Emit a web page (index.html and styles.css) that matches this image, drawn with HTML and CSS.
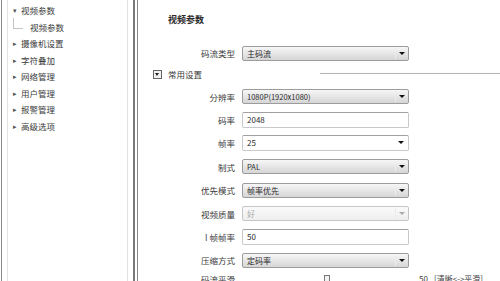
FILE: index.html
```html
<!DOCTYPE html>
<html lang="zh">
<head>
<meta charset="utf-8">
<link rel="stylesheet" href="styles.css">
</head>
<body>
<div class="page">
  <aside class="side">
    <div class="side-inner">
      <ul class="tree">
        <li class="node open"><span class="tw">&#9662;</span>视频参数</li>
        <li class="leaf"><span class="conn"></span>视频参数</li>
        <li class="node"><span class="tw">&#9656;</span>摄像机设置</li>
        <li class="node"><span class="tw">&#9656;</span>字符叠加</li>
        <li class="node"><span class="tw">&#9656;</span>网络管理</li>
        <li class="node"><span class="tw">&#9656;</span>用户管理</li>
        <li class="node"><span class="tw">&#9656;</span>报警管理</li>
        <li class="node"><span class="tw">&#9656;</span>高级选项</li>
      </ul>
    </div>
  </aside>
  <main class="main">
    <h1 class="title">视频参数</h1>
    <div class="form top">
      <label class="lbl">码流类型</label>
      <div class="sel">主码流<span class="arr"></span></div>
    </div>
    <div class="group">
      <span class="collapse"><span class="minus"></span></span>
      <span class="gtitle">常用设置</span>
      <span class="gline"></span>
    </div>
    <div class="form rows">
      <label class="lbl">分辨率</label>
      <div class="sel small">1080P(1920x1080)<span class="arr"></span></div>
      <label class="lbl">码率</label>
      <div class="inp">2048</div>
      <label class="lbl">帧率</label>
      <div class="inp combo">25<span class="arr"></span></div>
      <label class="lbl">制式</label>
      <div class="sel small">PAL<span class="arr"></span></div>
      <label class="lbl">优先模式</label>
      <div class="sel">帧率优先<span class="arr"></span></div>
      <label class="lbl">视频质量</label>
      <div class="sel dis">好<span class="arr"></span></div>
      <label class="lbl">I 帧帧率</label>
      <div class="inp">50</div>
      <label class="lbl">压缩方式</label>
      <div class="sel">定码率<span class="arr"></span></div>
      <label class="lbl last">码流平滑</label>
      <div class="slider"><span class="thumb"></span><span class="val">50</span><span class="hint">[清晰&lt;-&gt;平滑]</span></div>
    </div>
  </main>
</div>
</body>
</html>
```
FILE: styles.css
```css
* { box-sizing: border-box; margin: 0; padding: 0; }
html, body { width: 500px; height: 281px; overflow: hidden; background: #fff; }
body {
  font-family: "Noto Sans CJK SC", "Liberation Sans", sans-serif;
  font-size: 8.5px;
  color: #3a3a3a;
}
.page { display: flex; height: 281px; }
.side {
  width: 134px;
  height: 300px;
  border-left: 1px solid #8a8a8a;
  border-right: 2px solid #7a7a7a;
  margin-left: 1px;
  padding: 0 5px 0 5px;
  background: #fff;
}
.side-inner {
  height: 100%;
  border-left: 1px solid #e2e2e2;
  border-right: 1px solid #e2e2e2;
}
.tree { list-style: none; padding-top: 2px; }
.tree li {
  height: 16.5px;
  line-height: 16.5px;
  display: flex;
  align-items: center;
  white-space: nowrap;
  color: #3a3a3a;
}
.tw {
  width: 10px;
  margin-left: 2px;
  margin-right: 1px;
  font-size: 7px;
  color: #555;
  text-align: center;
}
.leaf { padding-left: 5px; }
.conn {
  width: 10px;
  height: 11px;
  border-left: 1px solid #c4c4c4;
  border-bottom: 1px solid #c4c4c4;
  margin-top: -7px;
  margin-right: 7px;
}
.main {
  flex: 1;
  border-left: 1px solid #8a8a8a;
  margin-left: 2px;
  position: relative;
}
.title {
  font-size: 9px;
  font-weight: bold;
  padding: 13px 0 0 30px;
  height: 45px;
  color: #2a2a2a;
}
.form {
  display: grid;
  grid-template-columns: 97px 167px;
  column-gap: 7px;
  align-items: center;
}
.form.top { grid-auto-rows: 16px; }
.rows { grid-auto-rows: 23.4px; }
.lbl { text-align: right; white-space: nowrap; }
.lbl.last, .slider { align-self: start; margin-top: 1px; }
.sel, .inp {
  position: relative;
  height: 15px;
  font-size: 8px;
  line-height: 13px;
  padding-left: 4px;
  border: 1px solid #9c9c9c;
  border-radius: 2px;
  color: #2a2a2a;
  white-space: nowrap;
}
.sel { background: linear-gradient(#f7f7f7, #e6e6e6 50%, #d6d6d6); }
.sel.small { font-size: 7.5px; }
.inp { background: #fff; border-color: #c8c8c8; border-top-color: #a0a0a0; height: 16px; line-height: 14px; }
.sel.dis { background: linear-gradient(#fafafa, #eeeeee); border-color: #c6c6c6; color: #aaa; }
.arr {
  position: absolute;
  right: 1px;
  top: 1px;
  width: 12px;
  height: 11px;
  border-left: 1px solid #ececec;
}
.arr::after {
  content: "";
  position: absolute;
  left: 3px;
  top: 4px;
  border-left: 3px solid transparent;
  border-right: 3px solid transparent;
  border-top: 3px solid #111;
}
.dis .arr::after { border-top-color: #aaa; }
.combo .arr { border-left: none; }
.group {
  display: flex;
  align-items: center;
  height: 16px;
  margin: 5px 0 3px 15px;
}
.collapse {
  width: 9px;
  height: 9px;
  border: 1px solid #666;
  background: #f0f0f0;
  position: relative;
  margin-right: 6px;
}
.minus {
  position: absolute;
  left: 1px;
  top: 2px;
  border-left: 2.5px solid transparent;
  border-right: 2.5px solid transparent;
  border-top: 3px solid #222;
}
.gline { flex: 1; height: 1px; background: #b4b4b4; margin-left: 118px; margin-top: -2px; }
.slider { position: relative; height: 14px; }
.thumb {
  position: absolute;
  left: 82px;
  top: 2px;
  width: 6px;
  height: 7px;
  border: 1px solid #777;
  background: #f2f2f2;
}
.val { position: absolute; left: 177px; top: 0; font-size: 8px; line-height: 12px; }
.hint { position: absolute; left: 192px; top: 0; font-size: 8px; line-height: 12px; white-space: nowrap; }
```
